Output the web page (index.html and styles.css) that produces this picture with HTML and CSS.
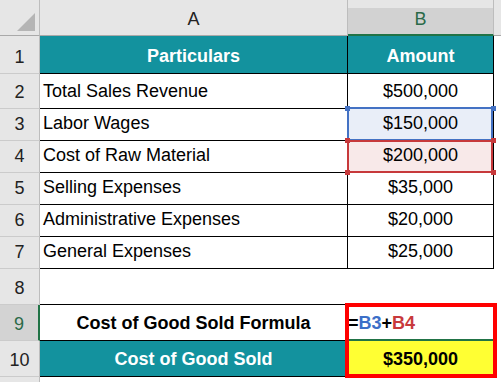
FILE: index.html
```html
<!DOCTYPE html>
<html>
<head>
<meta charset="utf-8">
<link rel="stylesheet" href="styles.css">
</head>
<body>
<div class="sheet">
  <div class="corner"><svg class="tri" width="40" height="36" viewBox="0 0 40 36"><polygon points="35,13 35,31 17,31" fill="#b5b5b5"/></svg></div>
  <div class="ch">A</div>
  <div class="ch chb">B</div>
  <div class="ch chr"></div>

  <div class="rh">1</div>
  <div class="c hd">Particulars</div>
  <div class="c hd">Amount</div>
  <div class="e"></div>

  <div class="rh">2</div>
  <div class="c t">Total Sales Revenue</div>
  <div class="c n">$500,000</div>
  <div class="e"></div>

  <div class="rh">3</div>
  <div class="c t">Labor Wages</div>
  <div class="c n selb">$150,000<span class="frame fb"></span><span class="hdl hb tl"></span><span class="hdl hb tr"></span></div>
  <div class="e"></div>

  <div class="rh">4</div>
  <div class="c t">Cost of Raw Material</div>
  <div class="c n selr">$200,000<span class="frame fr"></span><span class="hdl hr tl"></span><span class="hdl hr tr"></span><span class="hdl hr bl"></span><span class="hdl hr br"></span></div>
  <div class="e"></div>

  <div class="rh">5</div>
  <div class="c t">Selling Expenses</div>
  <div class="c n">$35,000</div>
  <div class="e"></div>

  <div class="rh">6</div>
  <div class="c t">Administrative Expenses</div>
  <div class="c n">$20,000</div>
  <div class="e"></div>

  <div class="rh">7</div>
  <div class="c t">General Expenses</div>
  <div class="c n">$25,000</div>
  <div class="e"></div>

  <div class="rh">8</div>
  <div class="c blank"></div>
  <div class="c blank"></div>
  <div class="e"></div>

  <div class="rh rh-act">9</div>
  <div class="c n b">Cost of Good Sold Formula</div>
  <div class="c t b act">=<span class="ref-b">B3</span>+<span class="ref-r">B4</span><span class="redbox"></span></div>
  <div class="e"></div>

  <div class="rh">10</div>
  <div class="c hd">Cost of Good Sold</div>
  <div class="c n b yel">$350,000</div>
  <div class="e"></div>

  <div class="rh last"></div>
  <div class="e"></div>
  <div class="e"></div>
  <div class="e"></div>
</div>
</body>
</html>
```
FILE: styles.css
```css
html, body {
  margin: 0;
  padding: 0;
  background: #fff;
}
.sheet {
  width: 501px;
  height: 382px;
  overflow: hidden;
  display: grid;
  grid-template-columns: 40px 308px 146px 1fr;
  grid-template-rows: 36px 38px 35px 32px 32px 32px 32px 32px 36px 36px 36px 1fr;
  font-family: "Liberation Sans", Arial, sans-serif;
  font-size: 18px;
  color: #000;
}
.sheet > div {
  box-sizing: border-box;
}
.corner {
  background: #e6e6e6;
  border-right: 1px solid #bdbdbd;
  border-bottom: 1px solid #a9a9a9;
}
.tri { display: block; }
.ch {
  background: #e6e6e6;
  border-bottom: 1px solid #a9a9a9;
  border-right: 1px solid #bdbdbd;
  display: flex;
  align-items: flex-end;
  justify-content: center;
  padding-bottom: 5px;
  color: #222;
}
.chb {
  background: linear-gradient(#e6e6e6 0 8px, #d2d2d2 8px);
  border-bottom: 2px solid #217346;
  color: #2b6a48;
  padding-bottom: 4px;
}
.chr { border-right: none; }
.rh {
  background: #e6e6e6;
  border-right: 1px solid #bdbdbd;
  border-bottom: 1px solid #cbcbcb;
  display: flex;
  justify-content: center;
  align-items: flex-end;
  padding-bottom: 5px;
  color: #222;
}
.rh-act {
  background: #d3d3d3;
  border-right: 2px solid #217346;
  color: #2b6a48;
}
.c {
  border-right: 1px solid #000;
  border-bottom: 1px solid #000;
  display: flex;
  align-items: flex-end;
  padding-bottom: 6px;
  position: relative;
  white-space: nowrap;
}
.t { padding-left: 3px; }
.n { justify-content: center; }
.b { font-weight: bold; }
.hd {
  background: #13929e;
  color: #fff;
  font-weight: bold;
  justify-content: center;
}
.blank { border-right: none; }
.e { background: #fff; }
.selb { background: #e9eef8; }
.selr { background: #f8e9e9; }
.frame {
  position: absolute;
  box-sizing: border-box;
  border: 2px solid;
}
.fb {
  left: -1px; right: 0; top: -2px; bottom: -1px;
  border-color: #4472c4;
}
.fr {
  left: -1px; right: 0; top: -1px; bottom: -1px;
  border-color: #c7393b;
}
.hdl {
  position: absolute;
  width: 5px;
  height: 5px;
  z-index: 1;
}
.hb { background: #4472c4; }
.hr { background: #c7393b; }
.tl { left: -3px; top: -3px; }
.tr { right: -3px; top: -3px; }
.bl { left: -3px; bottom: -3px; }
.br { right: -3px; bottom: -3px; }
.act {
  border-bottom: 2px solid #217346;
  padding-left: 0;
  padding-bottom: 5px;
}
.ref-b { color: #3c6fc8; }
.ref-r { color: #c8393c; }
.redbox {
  position: absolute;
  box-sizing: border-box;
  left: -3px;
  top: -2px;
  width: 152px;
  height: 75px;
  border: 4px solid #ff0000;
  z-index: 3;
}
.yel { background: #ffff33; }
.last { border-bottom: none; }
```
